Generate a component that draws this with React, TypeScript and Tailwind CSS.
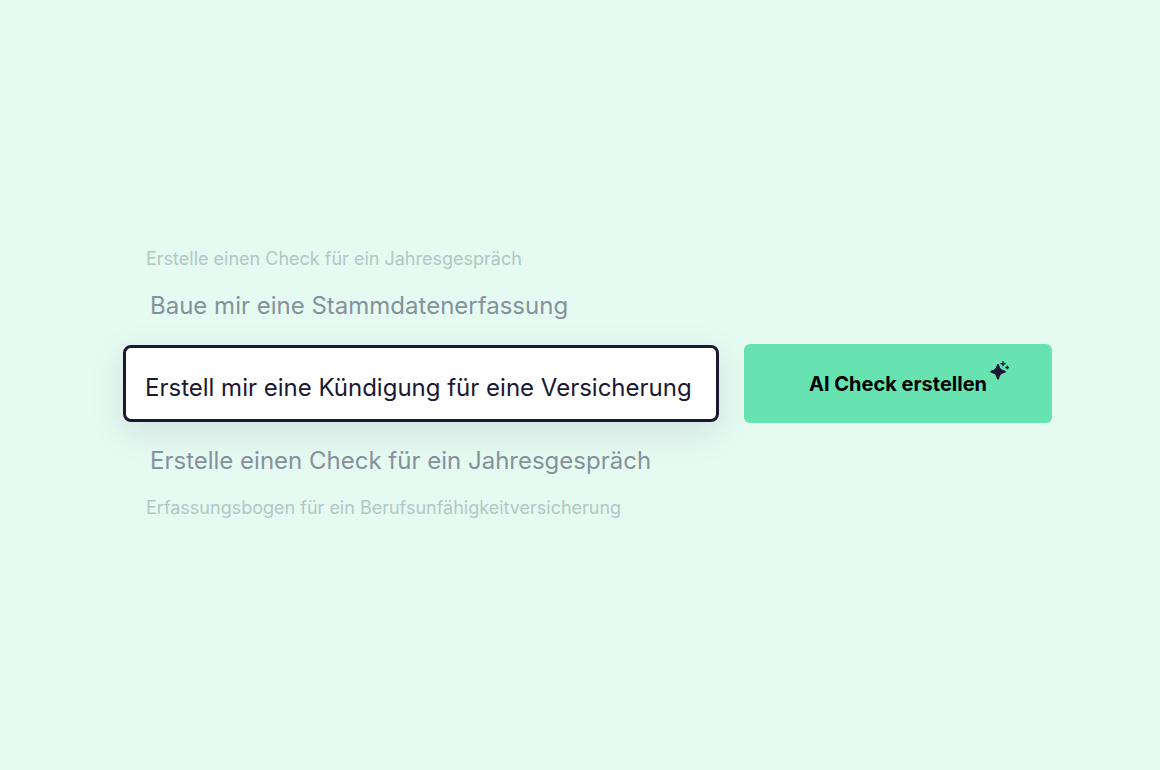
const Sparkles = () => {
  return (
    <svg viewBox="0 0 20 20" className="h-5 w-5" fill="#1a1833" aria-hidden="true">
      <path d="M8 4C8.700 4 9 4.500 9.300 5.400C10.200 8.500 10.600 9 14 10.200C15.300 10.700 15.800 11 15.800 11.700C15.800 12.400 15.300 12.700 14 13.100C10.600 14.300 10.200 14.800 9.300 18C9 19 8.700 19.500 8 19.500C7.300 19.500 7 19 6.700 18C5.800 14.800 5.400 14.300 2 13.100C.8 12.700 .3 12.400 .3 11.700C.3 11 .8 10.700 2 10.200C5.400 9 5.800 8.500 6.700 5.400C7 4.500 7.300 4 8 4Z" />
      <path
        d="M13 1.700V5.700M11 3.700H15M17.200 6.200V8.800M15.900 7.500H18.500"
        stroke="#1a1833"
        strokeWidth="1.400"
        strokeLinecap="round"
      />
    </svg>
  )
}

const App = () => {
  return (
    <main className="flex min-h-screen flex-col justify-center bg-[#e5faf1] pr-[108px] pb-[3px] pl-[123px] font-['Inter','Liberation_Sans',sans-serif]">
      <div className="flex flex-col gap-[17px] pl-[23px]">
        <p className="text-lg leading-7 text-[#b2c8c5]">Erstelle einen Check für ein Jahresgespräch</p>
        <p className="pl-1 text-2xl leading-8 text-[#85929c]">Baue mir eine Stammdatenerfassung</p>
      </div>

      <form className="my-[22px] grid grid-cols-[596fr_308fr] items-center gap-[25px]" onSubmit={(e) => e.preventDefault()}>
        <input
          type="text"
          aria-label="Check beschreiben"
          defaultValue="Erstell mir eine Kündigung für eine Versicherung"
          className="h-[77px] w-full min-w-0 rounded-lg border-3 border-[#1a1833] bg-white px-[19px] pt-2 text-2xl text-[#1a1833] shadow-[0_10px_36px_rgba(26,24,51,0.1)] outline-none"
        />
        <button type="submit" className="flex h-[79px] items-center justify-center rounded-md bg-[#66e3b1] text-xl font-bold text-black">
          <span className="relative">
            AI Check erstellen
            <span className="absolute -top-2.5 left-full pl-[3px]">
              <Sparkles />
            </span>
          </span>
        </button>
      </form>

      <div className="flex flex-col gap-[17px] pl-[23px]">
        <p className="pl-1 text-2xl leading-8 text-[#85929c]">Erstelle einen Check für ein Jahresgespräch</p>
        <p className="text-lg leading-7 text-[#b2c8c5]">Erfassungsbogen für ein Berufsunfähigkeitversicherung</p>
      </div>
    </main>
  )
}

export default App
